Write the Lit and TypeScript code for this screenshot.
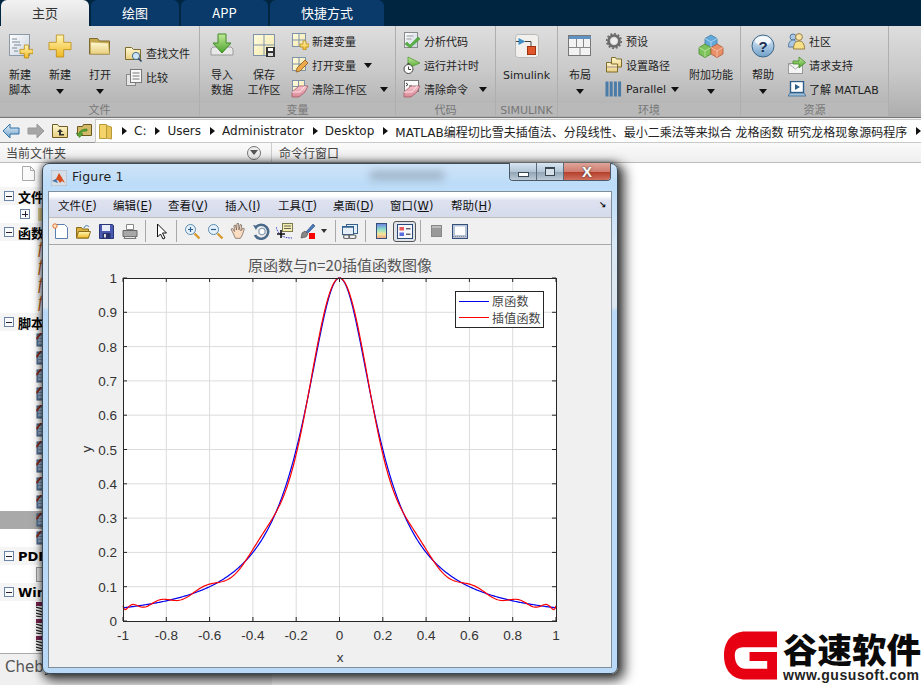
import { LitElement, html, css, svg } from "lit";
import { customElement } from "lit/decorators.js";

const ico = (w: number, h: number, body: unknown) =>
  html`<svg class="ic" width=${w} height=${h} viewBox="0 0 ${w} ${h}">${body}</svg>`;

const defs = svg`<defs>
<linearGradient id="yel" x1="0" y1="0" x2="0" y2="1"><stop offset="0" stop-color="#fff6b8"/><stop offset="1" stop-color="#f0b820"/></linearGradient>
<linearGradient id="fold" x1="0" y1="0" x2="0" y2="1"><stop offset="0" stop-color="#fff8d0"/><stop offset="1" stop-color="#e8cf80"/></linearGradient>
<linearGradient id="paper" x1="0" y1="0" x2="1" y2="1"><stop offset="0" stop-color="#ffffff"/><stop offset="1" stop-color="#c9d3df"/></linearGradient>
<linearGradient id="grn" x1="0" y1="0" x2="0" y2="1"><stop offset="0" stop-color="#c4ea9a"/><stop offset="1" stop-color="#4aa32c"/></linearGradient>
<linearGradient id="cell" x1="0" y1="0" x2="1" y2="1"><stop offset="0" stop-color="#fffbe0"/><stop offset="1" stop-color="#f5e9a8"/></linearGradient>
<linearGradient id="blu" x1="0" y1="0" x2="0" y2="1"><stop offset="0" stop-color="#e8f3fb"/><stop offset="1" stop-color="#6f9fc8"/></linearGradient>
<linearGradient id="erase" x1="0" y1="0" x2="0" y2="1"><stop offset="0" stop-color="#f7c4cc"/><stop offset="1" stop-color="#d98896"/></linearGradient>
<linearGradient id="cbar" x1="0" y1="0" x2="0" y2="1"><stop offset="0" stop-color="#6a7fe0"/><stop offset=".4" stop-color="#8fe0c8"/><stop offset=".7" stop-color="#f4e79a"/><stop offset="1" stop-color="#f0a080"/></linearGradient>
</defs>`;

const plusP = (x: number, y: number, s: number) => {
  const a = s / 3;
  return svg`<path d="M${x + a} ${y}h${a}v${a}h${a}v${a}h${-a}v${a}h${-a}v${-a}h${-a}v${-a}h${a}z" fill="url(#yel)" stroke="#b98a10" stroke-width=".8"/>`;
};
const gridP = (x: number, y: number, s: number) => svg`
  <rect x=${x + .5} y=${y + .5} width=${s} height=${s} fill="url(#cell)" stroke="#7f93a8"/>
  <path d="M${x + .5 + s / 2} ${y}v${s + 1}M${x} ${y + .5 + s / 2}h${s + 1}" stroke="#7f93a8"/>`;
const eraserP = (x: number, y: number) => svg`
  <path d="M${x} ${y + 7}l7 -6h9l-3 6 -6 5h-7z" fill="url(#erase)" stroke="#a45a6a" stroke-width=".8"/>
  <path d="M${x} ${y + 7}h8l5 -6" fill="none" stroke="#fff" stroke-width=".7"/>`;

const I = {
  newScript: ico(26, 26, svg`<rect x="2.5" y="1.5" width="20" height="21" fill="url(#paper)" stroke="#8c9aa8"/>
    <path d="M5 6h5M5 9h8M7 12h7M5 15h5M7 18h4" stroke="#7c8a9a" fill="none"/>${plusP(13, 12, 13)}`),
  plus: ico(24, 24, plusP(1, 1, 22)),
  open: ico(24, 20, svg`<path d="M1.5 2.5h8l2 2.5h10v13h-20z" fill="#c9a94e" stroke="#7e6a2c"/><path d="M2.5 6l18 1 1 11h-19z" fill="url(#fold)" stroke="#b99c48" stroke-width=".6"/>`),
  find: ico(17, 17, svg`<path d="M.5 2.5h6l2 2h7v10h-15z" fill="url(#fold)" stroke="#7e6a2c"/><circle cx="11" cy="11" r="3.6" fill="#cfe4f5" stroke="#456c8f"/><path d="M13.5 13.5l3 3" stroke="#2c4a66" stroke-width="1.6"/>`),
  compare: ico(17, 17, svg`<rect x="1.5" y="5.5" width="9" height="11" fill="#e6e6e6" stroke="#888"/><rect x="5.5" y=".5" width="11" height="13" fill="#f8f8f8" stroke="#777"/><path d="M7.5 4h7M7.5 7h7M7.5 10h7" stroke="#777"/>`),
  importD: ico(24, 26, svg`<path d="M1 16l2 -2h18l2 2v6h-22z" fill="#e8e8e8" stroke="#9a9a9a"/><path d="M8 1h8v9h5l-9 10 -9 -10h5z" fill="url(#grn)" stroke="#3d8a24"/>`),
  save: ico(24, 26, svg`${gridP(1, 1, 21)}<rect x="14" y="14" width="9" height="10" fill="#333"/><rect x="16" y="15" width="5" height="3" fill="#fff"/><rect x="16" y="20" width="5" height="3" fill="#ddd"/>`),
  newVar: ico(18, 18, svg`${gridP(1, 1, 13)}${plusP(9, 9, 9)}`),
  openVar: ico(18, 18, svg`${gridP(1, 1, 13)}<path d="M5 16l1 -4 8 -8 3 3 -8 8z" fill="#eea94a" stroke="#885c1e" stroke-width=".8"/>`),
  clearWs: ico(18, 18, svg`${gridP(1, 0, 12)}${eraserP(1, 5)}`),
  analyze: ico(18, 18, svg`<rect x="1.5" y=".5" width="13" height="15" fill="url(#paper)" stroke="#8a8a8a"/><path d="M3.5 4h7M3.5 7h5" stroke="#999"/><path d="M4 10l3 3 8 -8 2 2 -10 9 -5 -4z" fill="#58b144" stroke="#3a8a2c" stroke-width=".5"/>`),
  run: ico(18, 19, svg`<path d="M5 1l12 6 -12 5z" fill="url(#grn)" stroke="#4e9a30" stroke-width=".8"/><circle cx="5.5" cy="13" r="4.5" fill="#fff" stroke="#444"/><path d="M5.5 10.5v3h2.5M4.5 7.5h2" stroke="#444" fill="none"/>`),
  clearCmd: ico(18, 18, svg`<rect x="1.5" y=".5" width="14" height="11" fill="#fbfbfb" stroke="#777"/><path d="M3 3l2 1.5 -2 1.5M6 6h3" stroke="#333" fill="none"/>${eraserP(1, 5)}`),
  simulink: ico(24, 24, svg`<rect x=".5" y=".5" width="23" height="23" rx="3" fill="#f2f0ec" stroke="#b9b9b9"/><path d="M3.5 4l7 3.5 -7 3.5z" fill="#3e8fc8"/><path d="M1 7.5h3M10 7.5h6v5" stroke="#444" fill="none"/><rect x="12.5" y="12.5" width="8" height="8" fill="#e0562a" stroke="#9c3514"/>`),
  layout: ico(24, 22, svg`<rect x=".5" y=".5" width="22" height="20" fill="#f3f3f3" stroke="#777"/><rect x="1" y="1" width="22" height="3" fill="#5f92c2"/><path d="M1 12.5h22M8.500 4v8.500M15.500 4v8.500M12 12.500v8" stroke="#888"/>`),
  gear: ico(18, 18, svg`<circle cx="9" cy="9" r="5.5" fill="none" stroke="#6a6a6a" stroke-width="2.600"/><circle cx="9" cy="9" r="7.3" fill="none" stroke="#6a6a6a" stroke-width="1.6" stroke-dasharray="2 1.8"/><circle cx="9" cy="9" r="3" fill="#eee"/>`),
  setPath: ico(18, 18, svg`<path d="M6.5 1.5h4l1 1.5h5v8h-10z" fill="url(#fold)" stroke="#7e6a2c"/><path d="M1.5 6.5h4l1 1.5h6v8h-11z" fill="url(#fold)" stroke="#7e6a2c"/><path d="M2 11h10" stroke="#a88"/>`),
  parallel: ico(17, 16, svg`<rect x=".5" y=".5" width="3" height="15" fill="#4b7ca8"/><rect x="4.7" y=".5" width="3" height="15" fill="#4b7ca8"/><rect x="8.9" y=".5" width="3" height="15" fill="#4b7ca8"/><rect x="13.1" y=".5" width="3" height="15" fill="#4b7ca8"/>`),
  addons: ico(26, 24, svg`<path d="M13 1l6 3.5v6.5l-6 3.5 -6 -3.5v-6.5z" fill="#62a8d8" stroke="#3f7ca8" stroke-width=".8"/><path d="M7 4.5l6 3.5 6 -3.5M13 8v6" stroke="#b8dcf2" fill="none" stroke-width=".8"/>
    <path d="M7 10l6 3.5v6.5l-6 3.5 -6 -3.5v-6.5z" fill="#7ec25c" stroke="#4a8a30" stroke-width=".8"/><path d="M1 13.5l6 3.5 6 -3.5M7 17v6" stroke="#c4e8ac" fill="none" stroke-width=".8"/>
    <path d="M19 10l6 3.5v6.5l-6 3.5 -6 -3.5v-6.5z" fill="#e88e68" stroke="#b05c38" stroke-width=".8"/><path d="M13 13.5l6 3.5 6 -3.5M19 17v6" stroke="#f8c8b0" fill="none" stroke-width=".8"/>`),
  help: ico(24, 24, svg`<circle cx="12" cy="12" r="11" fill="url(#blu)" stroke="#3c6688"/><ellipse cx="12" cy="7" rx="8" ry="4.5" fill="#fff" opacity=".75"/><text class="q" x="12" y="17.500" text-anchor="middle">?</text>`),
  community: ico(18, 18, svg`<circle cx="5" cy="5" r="3" fill="#a9c6e4" stroke="#567a9e"/><path d="M0.5 15c0 -5 2 -7 4.5 -7s4.5 2 4.5 7z" fill="#a9c6e4" stroke="#567a9e"/><circle cx="11" cy="5" r="3.4" fill="#f8e4a8" stroke="#9a8040"/><path d="M5.5 17c0 -6 2.5 -8 5.5 -8s5.5 2 5.5 8z" fill="#f8e088" stroke="#9a8040"/>`),
  request: ico(18, 18, svg`<rect x=".5" y="7.5" width="14" height="10" fill="#f4f4f4" stroke="#999"/><path d="M1 8l6.5 5 6.5 -5" stroke="#aaa" fill="none"/><path d="M5 5h6v-4l6.5 5.5 -6.5 5.5v-4h-6z" fill="url(#grn)" stroke="#3d8a24" stroke-width=".8"/>`),
  learn: ico(18, 17, svg`<rect x="2.5" y=".5" width="13" height="11" fill="#fff" stroke="#2e5f88" stroke-width="1.4"/><path d="M7 3l5 3 -5 3z" fill="#2e5f88"/><path d="M2 12h14l2 3h-18z" fill="#9fc0da" stroke="#2e5f88" stroke-width=".7"/>`),
  back: ico(18, 16, svg`<path d="M1 8l7 -7v4h9v6h-9v4z" fill="url(#blu)" stroke="#2f73a8"/>`),
  fwd: ico(18, 16, svg`<path d="M17 8l-7 -7v4h-9v6h9v4z" fill="#a6a6a6" stroke="#9a9a9a"/>`),
  up: ico(16, 15, svg`<path d="M.5 1.5h5l1.5 2h8.5v11h-15z" fill="url(#fold)" stroke="#6c5a22"/><path d="M8 6l3 3h-2v2h3v1.5h-5v-3.500h-2z" fill="#333"/>`),
  browse: ico(17, 15, svg`<path d="M2.500 3.500h5l1 -2h8v11h-14z" fill="#d4b968" stroke="#6c5a22"/><path d="M12 6c-5 0 -8 2 -8 5l-3 -1 3.500 4.500 3.500 -3.500 -2 -.5c0 -1.500 2 -2.500 6 -2.500z" fill="#58a83a" stroke="#2f7a1e" stroke-width=".6"/>`),
  addrFolder: ico(14, 17, svg`<path d="M.5 1.500h7v14h-7z" fill="#f4d468" stroke="#b99a3c"/><path d="M7.500 2.500l5 1.500v12l-5 -1z" fill="#e8c455" stroke="#b99a3c"/>`),
  doc: ico(13, 15, svg`<path d="M.5 .5h8l4 4v10h-12z" fill="#fafafa" stroke="#aaa"/><path d="M8.500 .5v4h4" fill="none" stroke="#aaa"/>`),
  script: ico(10, 14, svg`<rect x="1" y="1" width="8" height="12" fill="#6e8fb4" stroke="#3f5a7a"/><path d="M2.500 4h5M2.500 7h5M2.500 10h5" stroke="#dce6f0"/><path d="M0 5l4 -5h2l-5 7z" fill="#8c2a18"/>`),
  win: ico(10, 15, svg`<rect x="0" y="0" width="10" height="4" fill="#7a2450"/><path d="M0 5l10 3M0 8l10 3M0 11l10 3M0 14l6 1" stroke="#222" stroke-width="1.200"/><rect x="6" y="4" width="4" height="3" fill="#5da040"/>`),
  pdf: ico(10, 15, svg`<rect x=".5" y=".5" width="9" height="14" fill="#e8e8e8" stroke="#999"/>`),
  figLogo: ico(16, 16, svg`<rect width="16" height="16" fill="#d6dfe8" stroke="#8a9aaa" stroke-width=".6"/><path d="M1 11l4 -2 3 -6 2 3 4 7 -3 -2 -2 2 -2 -3z" fill="#d8501e"/><path d="M1 11l4 -2 2 4z" fill="#3f7ab0"/>`),
};

const T = {
  nw: ico(17, 17, svg`<path d="M3.500 1.500h9l3 3v11h-12z" fill="#fff" stroke="#5a7fb0"/><circle cx="3" cy="3" r="2.200" fill="#fbe6c8" stroke="#e07030"/>`),
  op: ico(17, 17, svg`<path d="M1.500 4.500h5l1 1.500h6v9h-12z" fill="#d8b040" stroke="#8a6c1a"/><path d="M1.500 15l2 -6.500h12l-2 6.500z" fill="url(#yel)" stroke="#8a6c1a"/><path d="M9 5c1 -3 4 -3 5 -1" fill="none" stroke="#3b78b0"/>`),
  sv: ico(17, 17, svg`<path d="M1.500 1.500h13l1 1v13h-14z" fill="#4a5ab0" stroke="#2a3578"/><rect x="4" y="2" width="8" height="6" fill="#e8ecf8"/><rect x="4.500" y="10" width="8" height="5.500" fill="#26306a"/><rect x="6" y="11" width="2" height="3.500" fill="#ddd"/>`),
  pr: ico(16, 17, svg`<path d="M4.500 1.500h7v5h-7z" fill="#fff" stroke="#888"/><path d="M1 7.500h14v6h-14z" fill="#a8a8a8" stroke="#666"/><path d="M3 13.500h10l1 2h-12z" fill="#e4e4e4" stroke="#777"/>`),
  cur: ico(11, 17, svg`<path d="M1.500 1v13l3 -3 2.500 5 2 -1 -2.500 -5h4z" fill="#fff" stroke="#111"/>`),
  zi: ico(17, 17, svg`<circle cx="6.500" cy="6.500" r="5" fill="#e6f2fb" stroke="#5a8ab0"/><path d="M4 6.500h5M6.500 4v5" stroke="#2c5f8c" stroke-width="1.200"/><path d="M10.500 10.500l5 5" stroke="#d89a30" stroke-width="2.400"/>`),
  zo: ico(17, 17, svg`<circle cx="6.500" cy="6.500" r="5" fill="#e6f2fb" stroke="#5a8ab0"/><path d="M4 6.500h5" stroke="#2c5f8c" stroke-width="1.200"/><path d="M10.500 10.500l5 5" stroke="#d89a30" stroke-width="2.400"/>`),
  hd: ico(17, 17, svg`<path d="M3 10l-2 -4 1.500 -.5 2 3 -.5 -6 1.500 -.5 1 5 .5 -6.500h1.500l.5 6.500 1.200 -5.500 1.500.5 -.8 6 2 -3 1.500.8 -2 6 -2 3.500h-5z" fill="#fbdcc0" stroke="#6a5a50" stroke-width=".7"/>`),
  ro: ico(17, 17, svg`<path d="M3 4a7 7 0 1 1 -1 8" fill="none" stroke="#4a6a8a" stroke-width="2.600"/><path d="M0 2l5 1 -2 4z" fill="#4a6a8a"/><path d="M6 6.500l3 -1.500 3 1.500v4l-3 1.500 -3 -1.500z" fill="#fff" stroke="#4a6a8a" stroke-width=".8"/>`),
  dt: ico(17, 17, svg`<path d="M0 4c3 9 8 11 16 11" fill="none" stroke="#3040c0" stroke-dasharray="1.500 1"/><rect x="6.500" y=".5" width="10" height="8" fill="#f4eeb0" stroke="#7a7a50"/><path d="M8 3h7M8 5.500h7" stroke="#665"/><path d="M5 7v8M1 11h8" stroke="#111" stroke-width="1.600"/>`),
  br: ico(17, 17, svg`<path d="M7 9l7 -8 2 2 -7 7z" fill="#4a78b8" stroke="#2a4a7a" stroke-width=".6"/><path d="M2 15l1 -5 3 -2 3 3 -2 3z" fill="#888" stroke="#444" stroke-width=".6"/><rect x="10" y="10" width="6" height="6" fill="#f00"/>`),
  lk: ico(17, 17, svg`<rect x="5.500" y="1.500" width="11" height="9" fill="#e6eef8" stroke="#35608f"/><rect x="1.500" y="3.500" width="11" height="8" fill="#e6eef8" stroke="#35608f"/><path d="M2 4h10" stroke="#35608f" stroke-width="1.500"/><rect x="2.500" y="12" width="6" height="3.500" rx="1.700" fill="none" stroke="#666" stroke-width="1.200"/><rect x="8" y="12" width="7" height="3.500" rx="1.700" fill="none" stroke="#666" stroke-width="1.200"/>`),
  cb: ico(11, 16, svg`<rect x=".5" y=".5" width="10" height="15" fill="url(#cbar)" stroke="#34507a"/>`),
  lg: ico(16, 15, svg`<rect x=".5" y=".5" width="15" height="14" fill="#f4f6fa" stroke="#2a4a7a"/><rect x="2.500" y="3" width="4.500" height="3.500" fill="#e85a5a"/><rect x="2.500" y="8.500" width="4.500" height="3.500" fill="#5a6ae0"/><path d="M9 4.800h4.500M9 10.200h4.500" stroke="#222"/>`),
  sq: ico(11, 12, svg`<rect x=".5" y=".5" width="10" height="11" fill="#999" stroke="#888"/><rect x="1" y="1" width="9" height="2" fill="#bbb"/>`),
  wn: ico(16, 15, svg`<rect x=".5" y=".5" width="15" height="14" fill="#b8c4d8" stroke="#34507a"/><rect x="3" y="2.500" width="10" height="8.500" fill="#fff"/><path d="M1 12.500h14" stroke="#888" stroke-dasharray="1 1"/>`),
};

const caret = html`<i class="caret"></i>`;
const big = (w: string, icon: unknown, lines: string[], drop = false) => html`
  <div class="big ${w}"><div class="bigicon">${icon}</div>
    <div class="biglabel">${lines.map((l) => html`<span>${l}</span>`)}${drop ? caret : ""}</div></div>`;
const small = (icon: unknown, label: string, drop = "") => html`
  <div class="small"><span class="sicon">${icon}</span><span>${label}</span>${drop ? html`<i class="caret ${drop}"></i>` : ""}</div>`;

const runge = (x: number) => 1 / (1 + 25 * x * x);
const N = 21;
const nodes = Array.from({ length: N }, (_, k) => Math.cos(((2 * k + 1) * Math.PI) / (2 * N)));
const interp = (x: number) => {
  let s = 0;
  for (let i = 0; i < N; i++) {
    let l = 1;
    for (let j = 0; j < N; j++) if (j !== i) l *= (x - nodes[j]) / (nodes[i] - nodes[j]);
    s += l * runge(nodes[i]);
  }
  return s;
};
const AX = { l: 123, r: 556, t: 278, b: 621 };
const px = (x: number) => AX.l + ((x + 1) / 2) * (AX.r - AX.l);
const py = (y: number) => AX.b - y * (AX.b - AX.t);
const pathOf = (f: (x: number) => number) => {
  let d = "";
  for (let i = 0; i <= 430; i++) {
    const x = -1 + i / 215;
    d += `${i ? "L" : "M"}${px(x).toFixed(2)} ${py(Math.min(f(x), 1.002)).toFixed(2)}`;
  }
  return d;
};
const xticks = [-1, -0.8, -0.6, -0.4, -0.2, 0, 0.2, 0.4, 0.6, 0.8, 1];
const yticks = [0, 0.1, 0.2, 0.3, 0.4, 0.5, 0.6, 0.7, 0.8, 0.9, 1];

@customElement("app-root")
export class AppRoot extends LitElement {
  static styles = css`
    :host { display: block; width: 921px; height: 685px; overflow: hidden; position: relative; background: #fff;
      font-family: "DejaVu Sans", "Noto Sans CJK SC", sans-serif; font-size: 11px; color: #222; }
    .ic { display: block; flex: none; }
    .q { font: 700 15px "Liberation Sans", sans-serif; fill: #1d2f52; }
    .hiddendefs { position: absolute; width: 0; height: 0; }
    .tabs { display: flex; height: 26px; background: #002540; gap: 2px; padding-left: 1px; }
    .tab { width: 88px; display: flex; align-items: center; justify-content: center; font-size: 13px; color: #fff; padding-bottom: 2px; box-sizing: border-box;
      background: #093a69; border-radius: 6px 6px 0 0; font-family: "Noto Sans CJK SC", sans-serif; }
    .tab.on { background: linear-gradient(#f2f2f2, #dcdcdc); color: #333; }
    .tab.w87 { width: 87px; } .tab.wide { width: 114px; }
    .ribbon { display: flex; height: 92px; background: linear-gradient(#dedede, #c9c9c9 50%, #adadad); border-bottom: 1px solid #777; box-sizing: border-box; }
    .group { display: flex; flex-direction: column; border-right: 1px solid #aeaeae; box-sizing: border-box; height: 90px; }
    .g1 { width: 200px; } .g2 { width: 196px; } .g3 { width: 100px; } .g4 { width: 62px; } .g5 { width: 183px; } .g6 { width: 148px; }
    .g2 .body { padding-left: 1px; }
    .body { flex: 1; display: flex; min-height: 0; }
    .glabel { height: 13px; line-height: 15px; background: #b9b9b9; text-align: center; color: #777; font-size: 11px; }
    .big { display: flex; flex-direction: column; align-items: center; }
    .w40 { width: 40px; } .w42 { width: 42px; } .w44 { width: 44px; } .w50 { width: 50px; } .w61 { width: 61px; }
    .bigicon { height: 26px; margin-top: 7px; display: flex; align-items: center; }
    .biglabel { margin-top: 9px; display: flex; flex-direction: column; align-items: center; line-height: 15px; }
    .biglabel .caret { margin: 6px 0 0; }
    .caret { display: block; width: 0; height: 0; border: 4.500px solid transparent; border-top: 5px solid #111; border-bottom: 0; margin-left: 4px; flex: none; }
    .c2 { margin-left: 13px; } .c3 { margin-left: 5px; } .c4 { margin-left: 8px; } .c5 { margin-left: 11px; }
    .col { display: flex; flex-direction: column; padding-top: 3px; }
    .col.two { padding-top: 15px; }
    .m5 { margin-left: 5px; } .m6 { margin-left: 6px; } .m7 { margin-left: 7px; } .m4 { margin-left: 3px; }
    .w80 { width: 81px; }
    .small { height: 24px; display: flex; align-items: center; white-space: nowrap; }
    .sicon { width: 21px; flex: none; display: flex; }
    .addr { height: 25px; background: #f0f0f0; display: flex; align-items: center; border-bottom: 1px solid #9a9a9a; box-sizing: border-box; padding-top: 2px; }
    .nav { display: flex; width: 95px; flex: none; padding-left: 2px; gap: 7px; box-sizing: border-box; }
    .path { flex: 1; height: 22px; background: #fff; border: 1px solid #c9c9c9; border-right: 0; display: flex; align-items: center;
      padding-left: 3px; font-size: 12px; white-space: nowrap; overflow: hidden; color: #222; }
    .arr { width: 0; height: 0; border: 4.500px solid transparent; border-left: 5px solid #111; border-right: 0; margin: 0 7px 0 9px; flex: none; }
    .arr.first { margin-left: 9px; }
    .heads { display: flex; height: 20px; background: linear-gradient(#fafafa, #efefef); border-bottom: 1px solid #bbb; box-sizing: border-box; font-size: 12px; color: #444; }
    .hl { width: 272px; display: flex; align-items: center; justify-content: space-between; padding: 0 10px 0 6px; box-sizing: border-box; border-right: 1px solid #ccc; }
    .hr { padding-left: 7px; display: flex; align-items: center; }
    .circ { width: 12px; height: 12px; border-radius: 50%; border: 1px solid #777; background: #eee; display: flex; justify-content: center; align-items: center; }
    .circ i { width: 0; height: 0; border: 4px solid transparent; border-top: 5px solid #555; border-bottom: 0; }
    .tree { width: 272px; height: 489px; display: flex; flex-direction: column; }
    .toprow { height: 24px; padding-left: 22px; display: flex; align-items: flex-end; box-sizing: border-box; padding-bottom: 6px; }
    .th { height: 18px; display: flex; align-items: center; background: #f5f5f5; font-weight: 700; font-size: 13px; color: #000; }
    .box { width: 8px; height: 8px; border: 1px solid #6a84a6; background: #fafafa; margin: 0 4px 0 4px; display: flex; align-items: center; justify-content: center; position: relative; flex: none; }
    .box::before { content: ""; width: 6px; height: 1px; background: #223; }
    .box.pl::after { content: ""; position: absolute; width: 1px; height: 6px; background: #223; left: 3.500px; top: 1px; }
    .tr { height: 18px; display: flex; align-items: center; padding-left: 36px; }
    .tr.sel { background: #a9a9a9; }
    .tr.fr { padding-left: 20px; gap: 8px; }
    .tr.fr .box { margin: 0; }
    .fold { width: 10px; height: 13px; background: #e6d490; }
    .ff { font: italic 16px "Liberation Serif", serif; color: #c25a10; padding-left: 2px; margin-top: -4px; }
    .win3 { height: 17px; padding-left: 36px; display: flex; align-items: center; }
    .status { width: 272px; height: 32px; border-top: 1px solid #aaa; background: #f0f0f0; padding: 4px 0 0 5px; font-size: 15px; color: #555; box-sizing: border-box; margin-top: 1px; }

    .window { position: absolute; left: 42px; top: 163px; width: 576px; height: 511px; box-sizing: border-box; border-radius: 7px; border: 1px solid #3c4a55;
      box-shadow: 4px 4px 12px 3px rgba(0,0,0,.7), 0 0 6px rgba(0,0,0,.5);
      background: linear-gradient(#cfe4f8 0, #bcdcf8 4%, #d9e8f5 16%, #dde6ee 28%, #b9d9f7 29%, #b9d9f7 100%);
      padding: 0 5px 5px 5px; display: flex; flex-direction: column; }
    .title { height: 27px; display: flex; align-items: flex-start; flex: none; }
    .title .logo { margin: 6px 5px 0 3px; }
    .title .cap { margin-top: 5px; font-size: 12.500px; color: #222; letter-spacing: .2px; width: 130px; }
    .smudge { margin: 7px 0 0 168px; width: 74px; height: 9px; background: #8d9fb0; filter: blur(4px); opacity: .7; }
    .wbtns { margin-left: auto; display: flex; height: 18px; border: 1px solid #4a5a68; border-top: 0; border-radius: 0 0 4px 4px; overflow: hidden; margin-right: 1px; box-sizing: border-box; margin-top: -1px; }
    .wb { width: 27px; background: linear-gradient(#d8e6f2, #b4c6d6 50%, #93a6b6 55%, #bccad6); border-right: 1px solid #5a6a78; display: flex; align-items: center; justify-content: center; color: #fff; box-sizing: border-box; }
    .wb.close { width: 46px; border-right: 0; background: linear-gradient(#e0a49a, #cf7e70 50%, #b5402c 55%, #d0705e); font: 700 15px "Liberation Sans", sans-serif; text-shadow: 0 0 2px #333; }
    .wb i { display: block; background: #fff; border: 1px solid #3a4650; box-sizing: border-box; }
    .wb i.min { width: 11px; height: 5px; margin-top: 5px; }
    .wb i.max { width: 10px; height: 9px; border-top-width: 2px; background: #d6e0e8; }
    .client { flex: 1; background: #f0f0f0; border: 1px solid #7f8f9c; display: flex; flex-direction: column; min-height: 0; }
    .menu { height: 26px; flex: none; display: flex; align-items: center; padding: 1px 0 0 9px; box-sizing: border-box; font-size: 11.500px;
      background: linear-gradient(#fff, #fff 15%, #dde1f0 35%, #d6dbeb); color: #111; border-bottom: 1px solid #bdbdbd; font-family: "DejaVu Sans", "Noto Sans CJK SC", sans-serif; }
    .mi { white-space: nowrap; width: 55px; flex: none; }
    .mi.w57 { width: 57px; } .mi.w53 { width: 53px; } .mi.w61 { width: 61px; }
    .mi u { text-underline-offset: 1px; }
    .resize { margin-left: auto; margin-right: 5px; font-size: 9px; font-weight: 700; }
    .tools { height: 27px; flex: none; display: flex; align-items: center; border-bottom: 1px solid #a8a8a8; box-sizing: border-box; }
    .t { width: 23px; flex: none; display: flex; justify-content: center; }
    .t.nar { width: 22px; }
    .t.lkt { margin-left: -2px; }
    .sep { width: 1px; height: 22px; background: #a8a8a8; flex: none; margin: 0 4px; }
    .tcaret { width: 0; height: 0; border: 3px solid transparent; border-top: 4px solid #333; border-bottom: 0; flex: none; margin: 0 4px 0 2px; }
    .on-btn { width: 23px; height: 21px; border: 1px solid #555; border-radius: 3px; background: #dfe3ea; box-sizing: border-box; display: flex; align-items: center; justify-content: center; flex: none; }
    .plot { display: block; flex: none; }
    .tt { font: 15px "Noto Sans CJK SC", "Liberation Sans", sans-serif; fill: #555; }
    .tk { font: 13.500px "Liberation Sans", sans-serif; fill: #333; }
    .lg { font: 12px "Noto Sans CJK SC", sans-serif; fill: #444; letter-spacing: .2px; }
    .mark { position: absolute; right: 0; bottom: 0; width: 198px; height: 56px; background: #fff; display: flex; align-items: flex-start; padding: 2px 0 0 1px; box-sizing: border-box; }
    .mt { margin-left: 5px; display: flex; flex-direction: column; margin-top: -1px; }
    .cn { font: 900 34.500px/36px "Noto Sans CJK SC", sans-serif; color: #0a0a0a; white-space: nowrap; }
    .url { font: 700 14px/14px "Liberation Sans", sans-serif; color: #222; letter-spacing: .55px; white-space: nowrap; margin-top: 2px; }
  `;

  render() {
    const scripts = Array.from({ length: 12 }, (_, i) => i);
    return html`
      <svg class="hiddendefs" width="0" height="0">${defs}</svg>
      <div class="tabs">
        <div class="tab on">主页</div><div class="tab">绘图</div><div class="tab w87">APP</div><div class="tab wide">快捷方式</div>
      </div>
      <div class="ribbon">
        <div class="group g1"><div class="body">
          ${big("w40", I.newScript, ["新建", "脚本"])}${big("w40", I.plus, ["新建"], true)}${big("w40", I.open, ["打开"], true)}
          <div class="col two m5">${small(I.find, "查找文件")}${small(I.compare, "比较")}</div>
        </div><div class="glabel">文件</div></div>
        <div class="group g2"><div class="body">
          ${big("w42", I.importD, ["导入", "数据"])}${big("w42", I.save, ["保存", "工作区"])}
          <div class="col m6">${small(I.newVar, "新建变量")}${small(I.openVar, "打开变量", "c4")}${small(I.clearWs, "清除工作区", "c2")}</div>
        </div><div class="glabel">变量</div></div>
        <div class="group g3"><div class="body">
          <div class="col m7">${small(I.analyze, "分析代码")}${small(I.run, "运行并计时")}${small(I.clearCmd, "清除命令", "c5")}</div>
        </div><div class="glabel">代码</div></div>
        <div class="group g4"><div class="body">${big("w61", I.simulink, ["Simulink"])}</div><div class="glabel">SIMULINK</div></div>
        <div class="group g5"><div class="body">
          ${big("w44", I.layout, ["布局"], true)}
          <div class="col m4 w80">${small(I.gear, "预设")}${small(I.setPath, "设置路径")}${small(I.parallel, "Parallel", "c3")}</div>
          ${big("w50", I.addons, ["附加功能"], true)}
        </div><div class="glabel">环境</div></div>
        <div class="group g6"><div class="body">
          ${big("w44", I.help, ["帮助"], true)}
          <div class="col m4">${small(I.community, "社区")}${small(I.request, "请求支持")}${small(I.learn, "了解 MATLAB")}</div>
        </div><div class="glabel">资源</div></div>
      </div>
      <div class="addr">
        <div class="nav">${I.back}${I.fwd}${I.up}${I.browse}</div>
        <div class="path">${I.addrFolder}<i class="arr first"></i>C:<i class="arr"></i>Users<i class="arr"></i>Administrator<i class="arr"></i>Desktop<i class="arr"></i>MATLAB编程切比雪夫插值法、分段线性、最小二乘法等来拟合 龙格函数 研究龙格现象源码程序<i class="arr"></i></div>
      </div>
      <div class="heads"><div class="hl">当前文件夹<span class="circ"><i></i></span></div><div class="hr">命令行窗口</div></div>
      <div class="tree">
        <div class="toprow">${I.doc}</div>
        <div class="th"><span class="box"></span>文件</div>
        <div class="tr fr"><span class="box pl"></span><span class="fold"></span></div>
        <div class="th"><span class="box"></span>函数</div>
        ${[0, 1, 2, 3].map(() => html`<div class="tr"><span class="ff">f</span></div>`)}
        <div class="th"><span class="box"></span>脚本</div>
        ${scripts.map((i) => html`<div class="tr ${i === 10 ? "sel" : ""}">${I.script}</div>`)}
        <div class="th"><span class="box"></span>PDF</div>
        <div class="tr">${I.pdf}</div>
        <div class="th"><span class="box"></span>Win</div>
        ${[0, 1, 2].map(() => html`<div class="win3">${I.win}</div>`)}
      </div>
      <div class="status">Chebyshev</div>

      <div class="window">
        <div class="title">
          <span class="logo">${I.figLogo}</span><span class="cap">Figure 1</span>
          <span class="smudge"></span>
          <div class="wbtns"><div class="wb"><i class="min"></i></div><div class="wb"><i class="max"></i></div><div class="wb close">X</div></div>
        </div>
        <div class="client">
          <div class="menu">
            <span class="mi">文件(<u>F</u>)</span><span class="mi">编辑(<u>E</u>)</span><span class="mi w57">查看(<u>V</u>)</span><span class="mi w53">插入(<u>I</u>)</span><span class="mi">工具(<u>T</u>)</span><span class="mi w57">桌面(<u>D</u>)</span><span class="mi w61">窗口(<u>W</u>)</span><span class="mi">帮助(<u>H</u>)</span>
            <span class="resize">↘</span>
          </div>
          <div class="tools">
            <span class="t">${T.nw}</span><span class="t">${T.op}</span><span class="t">${T.sv}</span><span class="t">${T.pr}</span><i class="sep"></i>
            <span class="t nar">${T.cur}</span><i class="sep"></i>
            <span class="t">${T.zi}</span><span class="t">${T.zo}</span><span class="t">${T.hd}</span><span class="t">${T.ro}</span><span class="t">${T.dt}</span><span class="t">${T.br}</span><i class="tcaret"></i><i class="sep"></i>
            <span class="t lkt">${T.lk}</span><i class="sep"></i>
            <span class="t">${T.cb}</span><span class="on-btn">${T.lg}</span><i class="sep"></i>
            <span class="t">${T.sq}</span><span class="t">${T.wn}</span>
          </div>
          <svg class="plot" width="562" height="421" viewBox="49 245 562 421">
            <text class="tt" x="340" y="271" text-anchor="middle">原函数与n=20插值函数图像</text>
            <rect x=${AX.l} y=${AX.t} width=${AX.r - AX.l} height=${AX.b - AX.t} fill="#fff"/>
            ${xticks.slice(1, -1).map((x) => svg`<path d="M${px(x).toFixed(1)} ${AX.t}V${AX.b}" stroke="#dcdcdc"/>`)}
            ${yticks.slice(1, -1).map((y) => svg`<path d="M${AX.l} ${py(y).toFixed(1)}H${AX.r}" stroke="#dcdcdc"/>`)}
            ${xticks.map((x) => svg`<path d="M${px(x).toFixed(1)} ${AX.t}v4M${px(x).toFixed(1)} ${AX.b}v-4" stroke="#262626"/>`)}
            ${yticks.map((y) => svg`<path d="M${AX.l} ${py(y).toFixed(1)}h4M${AX.r} ${py(y).toFixed(1)}h-4" stroke="#262626"/>`)}
            <path d=${pathOf(runge)} fill="none" stroke="#0000ee" stroke-width="1.200"/>
            <path d=${pathOf(interp)} fill="none" stroke="#f00" stroke-width="1.200"/>
            <rect x=${AX.l + .5} y=${AX.t + .5} width=${AX.r - AX.l} height=${AX.b - AX.t} fill="none" stroke="#262626"/>
            ${xticks.map((x) => svg`<text class="tk" x=${px(x).toFixed(1)} y="640" text-anchor="middle">${x}</text>`)}
            ${yticks.map((y) => svg`<text class="tk" x="117" y=${(py(y) + 5).toFixed(1)} text-anchor="end">${y}</text>`)}
            <text class="tk" x="340" y="662" text-anchor="middle">x</text>
            <text class="tk" transform="translate(91 449) rotate(-90)" text-anchor="middle">y</text>
            <rect x="455.500" y="291.500" width="88" height="36" fill="#fff" stroke="#262626"/>
            <path d="M459 301.500h30" stroke="#0000ee"/><path d="M459 317.500h30" stroke="#f00"/>
            <text class="lg" x="492" y="306">原函数</text><text class="lg" x="492" y="323">插值函数</text>
          </svg>
        </div>
      </div>

      <div class="mark">
        <svg width="55" height="50" viewBox="0 0 55 50">
          <path d="M54 0H22C8 0 0 10 0 24.500S8 49 22 49H54V21H26V30H44V38H22C15 38 11 32 11 24.500S15 16 22 16H54Z" fill="#e60012"/>
        </svg>
        <div class="mt"><span class="cn">谷速软件</span><span class="url">www.gususoft.com</span></div>
      </div>
    `;
  }
}
